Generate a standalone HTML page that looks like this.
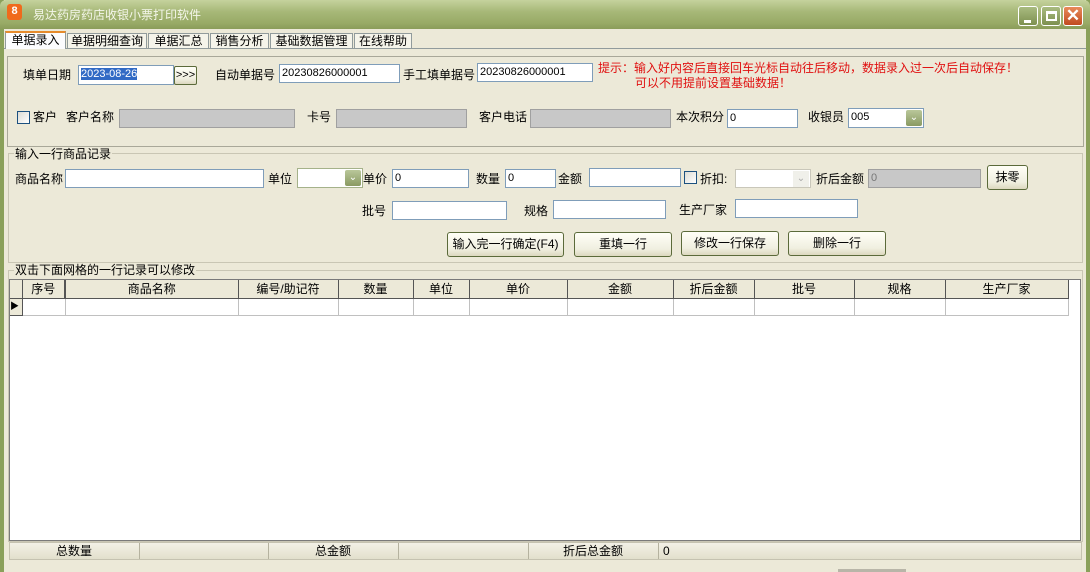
<!DOCTYPE html>
<html><head><meta charset="utf-8"><style>
*{box-sizing:border-box;margin:0;padding:0}
body{width:1090px;height:572px;overflow:hidden;background:#ece9d8;font:12px "Liberation Sans","Noto Sans CJK SC","WenQuanYi Zen Hei",sans-serif;color:#000;position:relative}
.a{position:absolute;white-space:nowrap}
.t{position:absolute;white-space:nowrap;line-height:14px}
.in{position:absolute;background:#fff;border:1px solid #7f9db9;height:19px;padding:1px 2px;font-size:11px;line-height:15px}
.g{background:#c8c8c8;border:1px solid #a0a0a0}
.btn{position:absolute;border:1px solid #5b6a3a;border-radius:3px;background:linear-gradient(#fffff7,#f0efe0 70%,#dcd8bf);text-align:center;line-height:23px}
.cb{position:absolute;width:13px;height:13px;border:1px solid #1c5180;background:linear-gradient(135deg,#dcdcd5,#fff)}
.dd{position:absolute;width:16px;height:16px;border-radius:2px;background:linear-gradient(#b9c79a,#8a9a62);color:#fff;font-size:10px;text-align:center;line-height:16px}
.grp{position:absolute;border:1px solid #c9c6b4}
th,td{border-right:1px solid #c0c0c0;font-weight:normal}
</style></head><body>
<!-- frame -->
<div class="a" style="left:0;top:0;width:4px;height:572px;background:#8aa05a"></div>
<div class="a" style="right:0;top:0;width:4px;height:572px;background:#8aa05a"></div>
<div class="a" style="left:0;top:0;width:1090px;height:29px;background:linear-gradient(#c5d29d,#a7b878 40%,#98aa66 80%,#8a9c5a);border-radius:6px 6px 0 0"></div>
<div class="a" style="left:7px;top:4px;width:15px;height:16px;background:#f06a1c;border-radius:3px;color:#fff;font-weight:bold;font-size:11px;text-align:center;line-height:15px">8</div>
<div class="t" style="left:33px;top:8px;color:#f4f6ea;font-size:12px">易达药房药店收银小票打印软件</div>
<div class="a" style="left:1018px;top:6px;width:20px;height:20px;border:1px solid #fff;border-radius:3px;background:linear-gradient(#a9bb80,#7d9050)"><div class="a" style="left:5px;top:13px;width:7px;height:3px;background:#fff"></div></div>
<div class="a" style="left:1041px;top:6px;width:20px;height:20px;border:1px solid #fff;border-radius:3px;background:linear-gradient(#a9bb80,#7d9050)"><div class="a" style="left:4px;top:4px;width:11px;height:10px;border:2px solid #fff;border-top-width:3px"></div></div>
<div class="a" style="left:1063px;top:6px;width:20px;height:20px;border:1px solid #fff;border-radius:3px;background:linear-gradient(#e88a5a,#c04a20);color:#fff;font-size:17px;line-height:17px;text-align:center;font-weight:bold">✕</div>
<!-- tabs -->
<div class="a" style="left:4px;top:48px;width:1082px;height:1px;background:#919b9c"></div>
<div class="a" style="left:5px;top:31px;width:61px;height:18px;background:#fcfcfe;border:1px solid #919b9c;border-bottom:none;border-top:2px solid #e68b2c;text-align:center;line-height:15px">单据录入</div>
<div class="a" style="left:67px;top:33px;width:80px;height:15px;background:#f5f4ea;border:1px solid #919b9c;border-bottom:none;text-align:center;line-height:14px">单据明细查询</div>
<div class="a" style="left:148px;top:33px;width:61px;height:15px;background:#f5f4ea;border:1px solid #919b9c;border-bottom:none;text-align:center;line-height:14px">单据汇总</div>
<div class="a" style="left:210px;top:33px;width:59px;height:15px;background:#f5f4ea;border:1px solid #919b9c;border-bottom:none;text-align:center;line-height:14px">销售分析</div>
<div class="a" style="left:270px;top:33px;width:83px;height:15px;background:#f5f4ea;border:1px solid #919b9c;border-bottom:none;text-align:center;line-height:14px">基础数据管理</div>
<div class="a" style="left:354px;top:33px;width:58px;height:15px;background:#f5f4ea;border:1px solid #919b9c;border-bottom:none;text-align:center;line-height:14px">在线帮助</div>
<div class="grp" style="left:7px;top:56px;width:1077px;height:91px;border-color:#a9a899"></div>
<!-- row1 -->
<div class="t" style="left:23px;top:68px">填单日期</div>
<div class="in" style="left:78px;top:65px;width:96px;height:20px"><span style="background:#316ac5;color:#fff">2023-08-26</span></div>
<div class="btn" style="left:174px;top:66px;width:23px;height:19px;line-height:16px;font-size:11px;border-radius:2px">&gt;&gt;&gt;</div>
<div class="t" style="left:215px;top:68px">自动单据号</div>
<div class="in" style="left:279px;top:64px;width:121px">20230826000001</div>
<div class="t" style="left:403px;top:68px">手工填单据号</div>
<div class="in" style="left:477px;top:63px;width:116px">20230826000001</div>
<div class="t" style="left:598px;top:61px;color:#e01010">提示：输入好内容后直接回车光标自动往后移动，数据录入过一次后自动保存！</div>
<div class="t" style="left:635px;top:76px;color:#e01010">可以不用提前设置基础数据！</div>
<!-- row2 -->
<div class="cb" style="left:17px;top:111px"></div>
<div class="t" style="left:33px;top:110px">客户</div>
<div class="t" style="left:66px;top:110px">客户名称</div>
<div class="in g" style="left:119px;top:109px;width:176px"></div>
<div class="t" style="left:307px;top:110px">卡号</div>
<div class="in g" style="left:336px;top:109px;width:131px"></div>
<div class="t" style="left:479px;top:110px">客户电话</div>
<div class="in g" style="left:530px;top:109px;width:141px"></div>
<div class="t" style="left:676px;top:110px">本次积分</div>
<div class="in" style="left:727px;top:109px;width:71px">0</div>
<div class="t" style="left:808px;top:110px">收银员</div>
<div class="in" style="left:848px;top:108px;width:76px;height:20px">005</div>
<div class="dd" style="left:906px;top:110px">⌄</div>
<!-- group 1 -->
<div class="grp" style="left:8px;top:153px;width:1075px;height:110px"></div>
<div class="t" style="left:14px;top:147px;background:#ece9d8;padding:0 1px">输入一行商品记录</div>
<div class="t" style="left:15px;top:172px">商品名称</div>
<div class="in" style="left:65px;top:169px;width:199px">&nbsp;</div>
<div class="t" style="left:268px;top:172px">单位</div>
<div class="in" style="left:297px;top:168px;width:66px;height:20px;border-color:#a5b28a"></div>
<div class="dd" style="left:345px;top:170px">⌄</div>
<div class="t" style="left:363px;top:172px">单价</div>
<div class="in" style="left:392px;top:169px;width:77px">0</div>
<div class="t" style="left:476px;top:172px">数量</div>
<div class="in" style="left:505px;top:169px;width:51px">0</div>
<div class="t" style="left:558px;top:172px">金额</div>
<div class="in" style="left:589px;top:168px;width:92px"></div>
<div class="cb" style="left:684px;top:171px"></div>
<div class="t" style="left:700px;top:172px">折扣:</div>
<div class="in" style="left:735px;top:169px;width:76px;border-color:#c9c7ba"></div>
<div class="a" style="left:793px;top:171px;width:16px;height:16px;color:#aaa;font-size:10px;text-align:center;line-height:16px;background:#f0f0ea">⌄</div>
<div class="t" style="left:816px;top:172px">折后金额</div>
<div class="in g" style="left:868px;top:169px;width:113px;color:#777">0</div>
<div class="btn" style="left:987px;top:165px;width:41px;height:25px">抹零</div>
<div class="t" style="left:362px;top:204px">批号</div>
<div class="in" style="left:392px;top:201px;width:115px"></div>
<div class="t" style="left:524px;top:204px">规格</div>
<div class="in" style="left:553px;top:200px;width:113px"></div>
<div class="t" style="left:679px;top:203px">生产厂家</div>
<div class="in" style="left:735px;top:199px;width:123px"></div>
<div class="btn" style="left:447px;top:232px;width:117px;height:25px">输入完一行确定(F4)</div>
<div class="btn" style="left:574px;top:232px;width:98px;height:25px">重填一行</div>
<div class="btn" style="left:681px;top:231px;width:98px;height:25px">修改一行保存</div>
<div class="btn" style="left:788px;top:231px;width:98px;height:25px">删除一行</div>
<!-- group 2 -->
<div class="grp" style="left:8px;top:270px;width:1075px;height:272px"></div>
<div class="t" style="left:14px;top:263px;background:#ece9d8;padding:0 1px">双击下面网格的一行记录可以修改</div>
<div class="a" style="left:9px;top:279px;width:1072px;height:262px;background:#fff;border:1px solid #7a7a7a"></div>
<table class="a" style="left:10px;top:280px;border-collapse:collapse;table-layout:fixed;font-size:12px">
<tr style="height:18px;background:#ece9d8">
<th style="width:12px;border-right:1px solid #555;border-bottom:1px solid #555"></th><th style="width:43px;border-right:2px solid #555;border-bottom:1px solid #555">序号</th><th style="width:173px;border-right:1px solid #555;border-bottom:1px solid #555">商品名称</th><th style="width:100px;border-right:1px solid #555;border-bottom:1px solid #555">编号/助记符</th><th style="width:75px;border-right:1px solid #555;border-bottom:1px solid #555">数量</th><th style="width:56px;border-right:1px solid #555;border-bottom:1px solid #555">单位</th><th style="width:98px;border-right:1px solid #555;border-bottom:1px solid #555">单价</th><th style="width:106px;border-right:1px solid #555;border-bottom:1px solid #555">金额</th><th style="width:81px;border-right:1px solid #555;border-bottom:1px solid #555">折后金额</th><th style="width:100px;border-right:1px solid #555;border-bottom:1px solid #555">批号</th><th style="width:91px;border-right:1px solid #555;border-bottom:1px solid #555">规格</th><th style="width:123px;border-right:1px solid #555;border-bottom:1px solid #555">生产厂家</th></tr>
<tr style="height:17px"><td style="background:#ece9d8;border-right:1px solid #555;border-bottom:1px solid #555;font-size:9px;line-height:9px">▶</td><td style="border-bottom:1px solid #c0c0c0"></td><td style="border-bottom:1px solid #c0c0c0"></td><td style="border-bottom:1px solid #c0c0c0"></td><td style="border-bottom:1px solid #c0c0c0"></td><td style="border-bottom:1px solid #c0c0c0"></td><td style="border-bottom:1px solid #c0c0c0"></td><td style="border-bottom:1px solid #c0c0c0"></td><td style="border-bottom:1px solid #c0c0c0"></td><td style="border-bottom:1px solid #c0c0c0"></td><td style="border-bottom:1px solid #c0c0c0"></td><td style="border-bottom:1px solid #c0c0c0"></td></tr>
</table>
<!-- status -->
<div class="a" style="left:9px;top:542px;width:1073px;height:18px;background:linear-gradient(#f3f1e6,#e2dfcc);border:1px solid #c5c2b0"></div>
<div class="t" style="left:9px;top:544px;width:130px;text-align:center">总数量</div>
<div class="a" style="left:139px;top:543px;width:1px;height:16px;background:#b5b29f"></div>
<div class="a" style="left:268px;top:543px;width:1px;height:16px;background:#b5b29f"></div>
<div class="t" style="left:268px;top:544px;width:130px;text-align:center">总金额</div>
<div class="a" style="left:398px;top:543px;width:1px;height:16px;background:#b5b29f"></div>
<div class="a" style="left:528px;top:543px;width:1px;height:16px;background:#b5b29f"></div>
<div class="t" style="left:528px;top:544px;width:130px;text-align:center">折后总金额</div>
<div class="a" style="left:658px;top:543px;width:1px;height:16px;background:#b5b29f"></div>
<div class="t" style="left:663px;top:544px">0</div>
<div class="a" style="left:838px;top:569px;width:68px;height:3px;background:#b8b5a8"></div>
</body></html>
